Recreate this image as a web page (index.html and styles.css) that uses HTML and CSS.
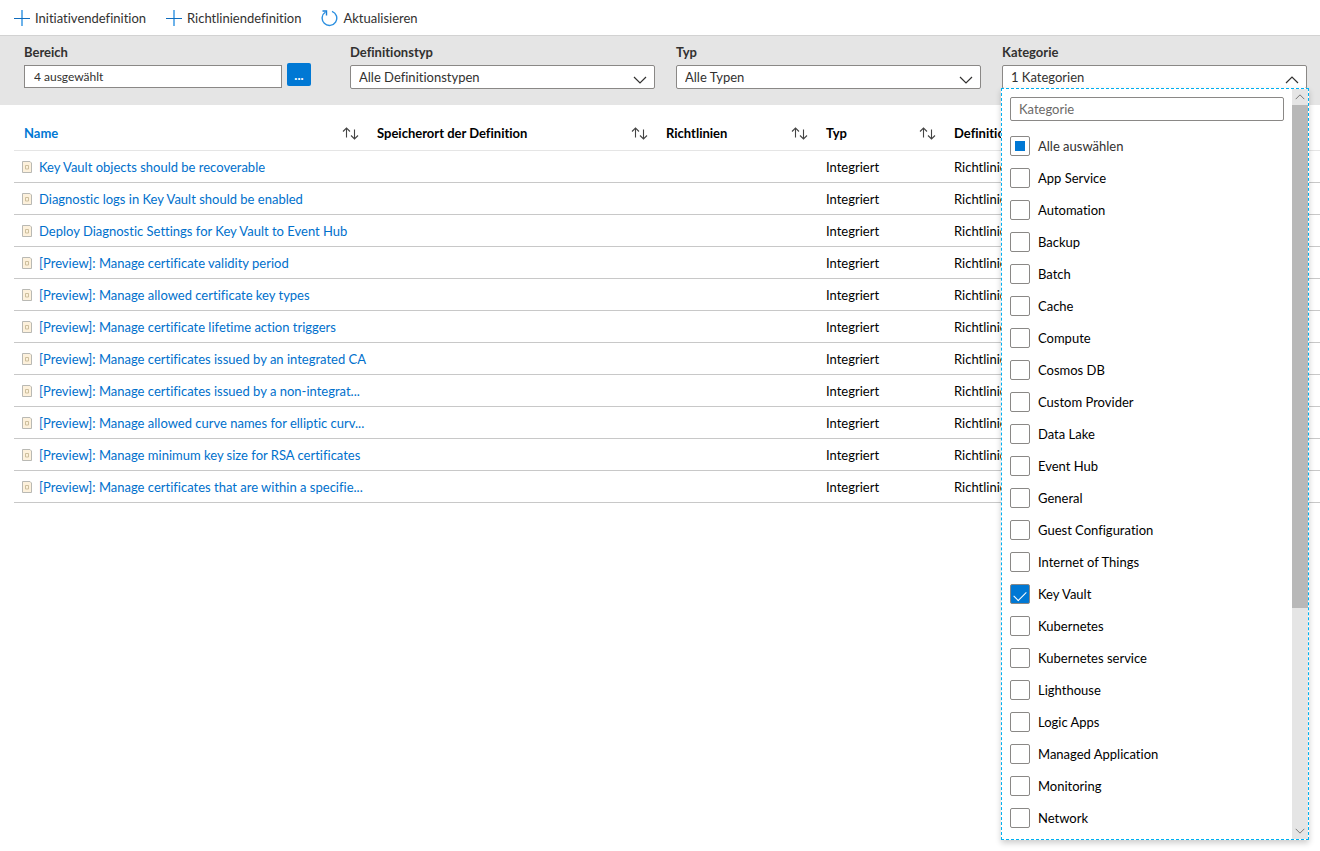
FILE: index.html
```html
<!DOCTYPE html>
<html lang="de">
<head>
<meta charset="utf-8">
<title>Richtliniendefinitionen</title>
<link rel="stylesheet" href="styles.css">
</head>
<body>
<svg class="sprite" aria-hidden="true">
  <symbol id="plus" viewBox="0 0 16 16"><path d="M8 0v16" stroke="#6cb2ea" stroke-width="2"/><path d="M0 8.500h16" stroke="#0f6cbd" stroke-width="1"/></symbol>
  <symbol id="refresh" viewBox="0 0 17 18"><path d="M11 2.300A7.300 7.300 0 1 1 4.500 3" fill="none" stroke="#2b8fe0" stroke-width="1.400"/><path d="M1.500 2h4v4.500" fill="none" stroke="#1a7fd6" stroke-width="1.400"/></symbol>
  <symbol id="sort" viewBox="0 0 17 13"><path d="M4.500 10.500V1M1 4.500L4.500 1L8 4.500M12.500 2.500V12M9 8.500l3.500 3.500L16 8.500" fill="none" stroke="#444" stroke-width="1.100"/></symbol>
  <symbol id="doc" viewBox="0 0 10 12"><path d="M.5.5h7.500l1.500 1.500v9.500h-9z" fill="#fdf1dc" stroke="#b9b9b4"/><path d="M3.500 4.500h3v3.500h-3z" fill="none" stroke="#cdbf9d"/></symbol>
  <symbol id="down" viewBox="0 0 14 8"><path d="M1 1l6 6l6-6" fill="none" stroke="#323130" stroke-width="1.200"/></symbol>
  <symbol id="up" viewBox="0 0 14 8"><path d="M1 7l6-6l6 6" fill="none" stroke="#323130" stroke-width="1.200"/></symbol>
</svg>

<nav class="toolbar">
  <button class="tool" type="button"><svg class="icon-plus"><use href="#plus"/></svg>Initiativendefinition</button>
  <button class="tool" type="button"><svg class="icon-plus"><use href="#plus"/></svg>Richtliniendefinition</button>
  <button class="tool" type="button"><svg class="icon-refresh"><use href="#refresh"/></svg>Aktualisieren</button>
</nav>

<section class="filters">
  <div class="field">
    <label class="label" for="scope">Bereich</label>
    <div class="scope">
      <input class="scope-input" id="scope" type="text" value="4 ausgewählt" readonly>
      <button class="more" type="button" aria-label="Bereich auswählen">...</button>
    </div>
  </div>
  <div class="field">
    <label class="label" for="deftype">Definitionstyp</label>
    <div class="combo">
      <select class="select" id="deftype"><option>Alle Definitionstypen</option></select>
      <svg class="chevron"><use href="#down"/></svg>
    </div>
  </div>
  <div class="field">
    <label class="label" for="type">Typ</label>
    <div class="combo">
      <select class="select" id="type"><option>Alle Typen</option></select>
      <svg class="chevron"><use href="#down"/></svg>
    </div>
  </div>
  <div class="field">
    <label class="label" for="category">Kategorie</label>
    <div class="combo">
      <select class="select" id="category"><option>1 Kategorien</option></select>
      <svg class="chevron"><use href="#up"/></svg>
      <div class="popup">
        <div class="popup-body">
          <input class="search" type="text" placeholder="Kategorie" aria-label="Kategorie suchen">
          <label class="option option-all"><input class="check partial" type="checkbox">Alle auswählen</label>
          <label class="option"><input class="check" type="checkbox">App Service</label>
          <label class="option"><input class="check" type="checkbox">Automation</label>
          <label class="option"><input class="check" type="checkbox">Backup</label>
          <label class="option"><input class="check" type="checkbox">Batch</label>
          <label class="option"><input class="check" type="checkbox">Cache</label>
          <label class="option"><input class="check" type="checkbox">Compute</label>
          <label class="option"><input class="check" type="checkbox">Cosmos DB</label>
          <label class="option"><input class="check" type="checkbox">Custom Provider</label>
          <label class="option"><input class="check" type="checkbox">Data Lake</label>
          <label class="option"><input class="check" type="checkbox">Event Hub</label>
          <label class="option"><input class="check" type="checkbox">General</label>
          <label class="option"><input class="check" type="checkbox">Guest Configuration</label>
          <label class="option"><input class="check" type="checkbox">Internet of Things</label>
          <label class="option"><input class="check" type="checkbox" checked>Key Vault</label>
          <label class="option"><input class="check" type="checkbox">Kubernetes</label>
          <label class="option"><input class="check" type="checkbox">Kubernetes service</label>
          <label class="option"><input class="check" type="checkbox">Lighthouse</label>
          <label class="option"><input class="check" type="checkbox">Logic Apps</label>
          <label class="option"><input class="check" type="checkbox">Managed Application</label>
          <label class="option"><input class="check" type="checkbox">Monitoring</label>
          <label class="option"><input class="check" type="checkbox">Network</label>
        </div>
        <div class="scrollbar">
          <svg class="scroll-arrow"><use href="#up"/></svg>
          <div class="track"><div class="thumb"></div></div>
          <svg class="scroll-arrow"><use href="#down"/></svg>
        </div>
      </div>
    </div>
  </div>
</section>

<main class="content">
  <table class="grid">
    <colgroup><col class="col-name"><col class="col-place"><col class="col-policies"><col class="col-type"><col></colgroup>
    <thead>
      <tr>
        <th><div class="head head-active">Name<svg class="icon-sort"><use href="#sort"/></svg></div></th>
        <th><div class="head">Speicherort der Definition<svg class="icon-sort"><use href="#sort"/></svg></div></th>
        <th><div class="head">Richtlinien<svg class="icon-sort"><use href="#sort"/></svg></div></th>
        <th><div class="head">Typ<svg class="icon-sort"><use href="#sort"/></svg></div></th>
        <th><div class="head">Definitionstyp</div></th>
      </tr>
    </thead>
    <tbody>
      <tr><td><div class="name"><svg class="icon-doc"><use href="#doc"/></svg><a href="#">Key Vault objects should be recoverable</a></div></td><td></td><td></td><td>Integriert</td><td>Richtlinie</td></tr>
      <tr><td><div class="name"><svg class="icon-doc"><use href="#doc"/></svg><a href="#">Diagnostic logs in Key Vault should be enabled</a></div></td><td></td><td></td><td>Integriert</td><td>Richtlinie</td></tr>
      <tr><td><div class="name"><svg class="icon-doc"><use href="#doc"/></svg><a href="#">Deploy Diagnostic Settings for Key Vault to Event Hub</a></div></td><td></td><td></td><td>Integriert</td><td>Richtlinie</td></tr>
      <tr><td><div class="name"><svg class="icon-doc"><use href="#doc"/></svg><a href="#">[Preview]: Manage certificate validity period</a></div></td><td></td><td></td><td>Integriert</td><td>Richtlinie</td></tr>
      <tr><td><div class="name"><svg class="icon-doc"><use href="#doc"/></svg><a href="#">[Preview]: Manage allowed certificate key types</a></div></td><td></td><td></td><td>Integriert</td><td>Richtlinie</td></tr>
      <tr><td><div class="name"><svg class="icon-doc"><use href="#doc"/></svg><a href="#">[Preview]: Manage certificate lifetime action triggers</a></div></td><td></td><td></td><td>Integriert</td><td>Richtlinie</td></tr>
      <tr><td><div class="name"><svg class="icon-doc"><use href="#doc"/></svg><a href="#">[Preview]: Manage certificates issued by an integrated CA</a></div></td><td></td><td></td><td>Integriert</td><td>Richtlinie</td></tr>
      <tr><td><div class="name"><svg class="icon-doc"><use href="#doc"/></svg><a href="#">[Preview]: Manage certificates issued by a non-integrat...</a></div></td><td></td><td></td><td>Integriert</td><td>Richtlinie</td></tr>
      <tr><td><div class="name"><svg class="icon-doc"><use href="#doc"/></svg><a href="#">[Preview]: Manage allowed curve names for elliptic curv...</a></div></td><td></td><td></td><td>Integriert</td><td>Richtlinie</td></tr>
      <tr><td><div class="name"><svg class="icon-doc"><use href="#doc"/></svg><a href="#">[Preview]: Manage minimum key size for RSA certificates</a></div></td><td></td><td></td><td>Integriert</td><td>Richtlinie</td></tr>
      <tr><td><div class="name"><svg class="icon-doc"><use href="#doc"/></svg><a href="#">[Preview]: Manage certificates that are within a specifie...</a></div></td><td></td><td></td><td>Integriert</td><td>Richtlinie</td></tr>
    </tbody>
  </table>
</main>
</body>
</html>
```

FILE: styles.css
```css
* { box-sizing: border-box; }
body {
  margin: 0;
  min-height: 100vh;
  background: #fff;
  color: #000;
  font: 13px/20px Lato, "Open Sans", sans-serif;
  font-variant-ligatures: none;
}
button, input, select { font: inherit; color: inherit; margin: 0; }
.sprite { display: none; }

.toolbar {
  display: flex;
  gap: 20px;
  height: 36px;
  padding: 0 14px;
  align-items: center;
  border-bottom: 1px solid #d2d2d2;
  color: #323130;
}
.tool {
  display: flex;
  align-items: center;
  gap: 5px;
  padding: 0;
  border: 0;
  background: none;
}
.icon-plus { width: 16px; height: 16px; }
.icon-refresh { width: 17px; height: 18px; }

.filters {
  display: grid;
  grid-template-columns: repeat(4, 1fr);
  gap: 21px;
  padding: 6px 13px 16px 24px;
  background: #e5e5e5;
  color: #323130;
}
.field { display: flex; flex-direction: column; gap: 3px; }
.label { font-weight: 700; }
.scope { display: flex; gap: 5px; padding-right: 18px; align-items: flex-start; }
.scope-input {
  flex: 1;
  min-width: 0;
  height: 23px;
  padding: 0 9px;
  border: 1px solid #8a8886;
  background: #fff;
  font-size: 12px;
}
.more {
  width: 24px;
  height: 23px;
  padding: 0;
  border: 0;
  border-radius: 2px;
  margin-top: -2px;
  background: #0078d4;
  color: #fff;
  font-weight: 700;
  line-height: 20px;
}
.combo { position: relative; }
.select {
  display: block;
  width: 100%;
  height: 24px;
  padding: 0 8px;
  border: 1px solid #8a8886;
  border-radius: 2px;
  background: #fff;
  appearance: none;
}
.chevron {
  position: absolute;
  right: 8px;
  top: 11px;
  width: 14px;
  height: 8px;
  pointer-events: none;
}

.popup {
  position: absolute;
  z-index: 2;
  top: 23px;
  left: -1px;
  right: -2px;
  display: flex;
  border: 1px dashed #00b0f0;
  background: #fff;
  box-shadow: 0 3px 6px rgba(0, 0, 0, 0.2);
}
.popup-body { flex: 1; padding: 8px 8px 5px; }
.search {
  display: block;
  width: 100%;
  height: 24px;
  margin-bottom: 9px;
  padding: 0 8px;
  border: 1px solid #8a8886;
  border-radius: 2px;
}
.search::placeholder { color: #6b6967; opacity: 1; }
.option { display: flex; align-items: center; gap: 8px; height: 32px; color: #000; }
.option-all { color: #323130; }
.check {
  width: 20px;
  height: 20px;
  border: 1px solid #8a8886;
  border-radius: 2px;
  background: #fff;
  appearance: none;
  display: grid;
  place-items: center;
}
.partial::before { content: ""; width: 10px; height: 10px; background: #0078d4; }
.check:checked { background: #0078d4; }
.check:checked::before {
  content: "";
  width: 11px;
  height: 6px;
  border: solid #fff;
  border-width: 0 0 1px 1px;
  transform: rotate(-45deg);
}
.scrollbar {
  display: flex;
  flex-direction: column;
  align-items: center;
  width: 16px;
  background: #e5e5e5;
}
.scroll-arrow { width: 10px; height: 16px; opacity: 0.7; }
.track { flex: 1; width: 100%; }
.thumb { height: 70%; background: #b8b8b8; }

.content { padding-left: 14px; }
.grid { width: 100%; table-layout: fixed; border-collapse: collapse; }
.col-name { width: 353px; }
.col-place { width: 289px; }
.col-policies { width: 160px; }
.col-type { width: 128px; }
.grid th { height: 45px; padding: 12px 8px 0 10px; border-bottom: 1px solid #e5e5e5; text-align: left; font-weight: 700; }
.grid td { height: 32px; padding: 1px 0 0 10px; border-bottom: 1px solid #c8c8c8; white-space: nowrap; }
.head { display: flex; justify-content: space-between; align-items: center; }
.head-active { color: #0078d4; }
.icon-sort { width: 17px; height: 13px; }
.name { display: flex; align-items: center; gap: 7px; margin-left: -2px; }
.name a { color: #0070cc; text-decoration: none; }
.icon-doc { width: 10px; height: 12px; flex: none; }
```
